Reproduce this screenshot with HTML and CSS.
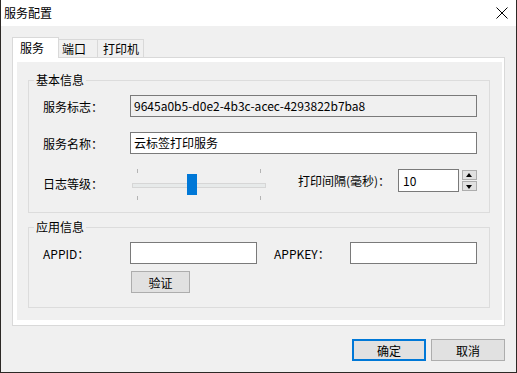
FILE: index.html
```html
<!DOCTYPE html>
<html lang="zh-CN">
<head>
    <meta charset="UTF-8">
    <title>服务配置</title>
    <link rel="stylesheet" href="styles.css">
</head>
<body>
    <div class="window">
        <div class="titlebar">
            <span class="title">服务配置</span>
            <svg class="close" width="12" height="12" viewBox="0 0 12 12">
                <path d="M0.5 0.5 L11.5 11.5 M11.5 0.5 L0.5 11.5" stroke="#000" stroke-width="1" fill="none"/>
            </svg>
        </div>
        <div class="body">
            <div class="tabs">
                <div class="tab tab-service active">服务</div>
                <div class="tab tab-port">端口</div>
                <div class="tab tab-printer">打印机</div>
            </div>
            <div class="panel">
                <div class="page">
                    <fieldset class="group group-basic">
                        <legend>基本信息</legend>
                        <div class="row row-id">
                            <span class="lbl">服务标志：</span>
                            <div class="field readonly wide">9645a0b5-d0e2-4b3c-acec-4293822b7ba8</div>
                        </div>
                        <div class="row row-name">
                            <span class="lbl">服务名称：</span>
                            <div class="field wide">云标签打印服务</div>
                        </div>
                        <div class="row row-level">
                            <span class="lbl">日志等级：</span>
                            <div class="slider">
                                <span class="tick tick-tl"></span>
                                <span class="tick tick-tr"></span>
                                <div class="track"></div>
                                <span class="thumb"></span>
                                <span class="tick tick-bl"></span>
                                <span class="tick tick-br"></span>
                            </div>
                            <div class="interval">
                                <span class="lbl-interval">打印间隔(毫秒)：</span>
                                <div class="field spin-field">10</div>
                                <div class="spin">
                                    <span class="spin-btn up"></span>
                                    <span class="spin-btn down"></span>
                                </div>
                            </div>
                        </div>
                    </fieldset>
                    <fieldset class="group group-app">
                        <legend>应用信息</legend>
                        <div class="row row-app">
                            <span class="lbl">APPID：</span>
                            <div class="field short"></div>
                            <span class="lbl lbl-key">APPKEY：</span>
                            <div class="field short"></div>
                        </div>
                        <div class="row row-verify">
                            <button class="btn verify">验证</button>
                        </div>
                    </fieldset>
                </div>
            </div>
            <div class="actions">
                <button class="btn primary">确定</button>
                <button class="btn">取消</button>
            </div>
        </div>
    </div>
</body>
</html>
```

FILE: styles.css
```css
* {
    box-sizing: border-box;
}
body {
    margin: 0;
    font-family: "Noto Sans CJK SC", "Microsoft YaHei", sans-serif;
    font-size: 12px;
    color: #000;
    background-color: #f0f0f0;
}
.window {
    width: 517px;
    height: 373px;
    border: 1px solid #2d2926;
    border-top: none;
    background-color: #f0f0f0;
    display: flex;
    flex-direction: column;
}
.titlebar {
    height: 26px;
    background-color: #fff;
    display: flex;
    align-items: center;
    justify-content: space-between;
    padding: 0 8px 0 3px;
}
.title {
    line-height: 16px;
}
.body {
    padding: 11px 11px 0 11px;
}

/* tabs */
.tabs {
    display: flex;
    align-items: flex-end;
    height: 20px;
}
.tab {
    height: 18px;
    line-height: 17px;
    border: 1px solid #d9d9d9;
    border-bottom: none;
    background-color: #f0f0f0;
    margin-left: -1px;
}
.tab.active {
    height: 21px;
    line-height: 20px;
    margin-left: 0;
    margin-bottom: -1px;
    background-color: #fff;
    position: relative;
    z-index: 1;
}
.tab-service {
    width: 47px;
    padding-left: 7px;
}
.tab-port {
    width: 40px;
    padding-left: 3px;
}
.tab-printer {
    width: 47px;
    padding-left: 5px;
}
.panel {
    width: 493px;
    height: 269px;
    border: 1px solid #d9d9d9;
    background-color: #fff;
    padding: 4px 2px 5px 4px;
}
.page {
    height: 100%;
    background-color: #f0f0f0;
    padding: 10px 12px 0 11px;
}

/* group boxes */
.group {
    margin: 0;
    padding: 0 0 13px 0;
    border: 1px solid #dcdcdc;
    min-width: 0;
}
.group legend {
    margin-left: 5px;
    padding: 0 2px;
    line-height: 16px;
}
.group-app {
    margin-top: 6px;
    padding-bottom: 14px;
}
.row {
    display: flex;
    align-items: center;
    padding-left: 14px;
}
.row-id {
    height: 22px;
    margin-top: 7px;
}
.row-name {
    height: 22px;
    margin-top: 15px;
}
.row-level {
    height: 30px;
    margin-top: 15px;
    align-items: flex-start;
}
.row-app {
    height: 22px;
    margin-top: 7px;
}
.row-verify {
    margin-top: 7px;
    padding-left: 102px;
}
.lbl {
    width: 87px;
    flex-shrink: 0;
}
.row-level .lbl {
    line-height: 30px;
}
.lbl-key {
    width: 76px;
    margin-left: 17px;
}

/* inputs */
.field {
    height: 22px;
    border: 1px solid #7a7a7a;
    background-color: #fff;
    padding-left: 3px;
    line-height: 20px;
    white-space: nowrap;
    overflow: hidden;
}
.field.readonly {
    background-color: #f0f0f0;
}
.wide {
    width: 347px;
}
.short {
    width: 127px;
}

/* slider */
.slider {
    position: relative;
    width: 138px;
    height: 30px;
}
.track {
    position: absolute;
    left: 2px;
    right: 2px;
    top: 14px;
    height: 5px;
    background-color: #e7eaea;
    border: 1px solid #d6d6d6;
}
.thumb {
    position: absolute;
    left: 57px;
    top: 5px;
    width: 10px;
    height: 21px;
    background-color: #0078d7;
}
.tick {
    position: absolute;
    width: 1px;
    height: 4px;
    background-color: #b4b4b4;
}
.tick-tl { left: 7px; top: 0; }
.tick-tr { left: 130px; top: 0; }
.tick-bl { left: 7px; top: 27px; }
.tick-br { left: 130px; top: 27px; }

.interval {
    display: flex;
    align-items: center;
    height: 23px;
    margin-left: 30px;
}
.lbl-interval {
    width: 100px;
}
.spin-field {
    width: 61px;
    height: 23px;
    line-height: 21px;
    padding-left: 4px;
}
.spin {
    display: flex;
    flex-direction: column;
    gap: 1px;
    margin-left: 3px;
    height: 23px;
    padding-top: 1px;
}
.spin-btn {
    width: 15px;
    height: 10px;
    background-color: #e1e1e1;
    border: 1px solid #adadad;
    position: relative;
}
.spin-btn::after {
    content: "";
    position: absolute;
    left: 3px;
    border-left: 3.5px solid transparent;
    border-right: 3.5px solid transparent;
}
.spin-btn.up::after {
    top: 2px;
    border-bottom: 4px solid #000;
}
.spin-btn.down::after {
    top: 3px;
    border-top: 4px solid #000;
}

/* buttons */
.btn {
    font-family: inherit;
    font-size: 12px;
    color: #000;
    background-color: #e1e1e1;
    border: 1px solid #adadad;
    padding: 0;
    height: 22px;
    width: 74px;
}
.btn.verify {
    width: 59px;
}
.btn.primary {
    border: 2px solid #0078d7;
}
.actions {
    display: flex;
    justify-content: flex-end;
    gap: 5px;
    margin-top: 13px;
}
```
